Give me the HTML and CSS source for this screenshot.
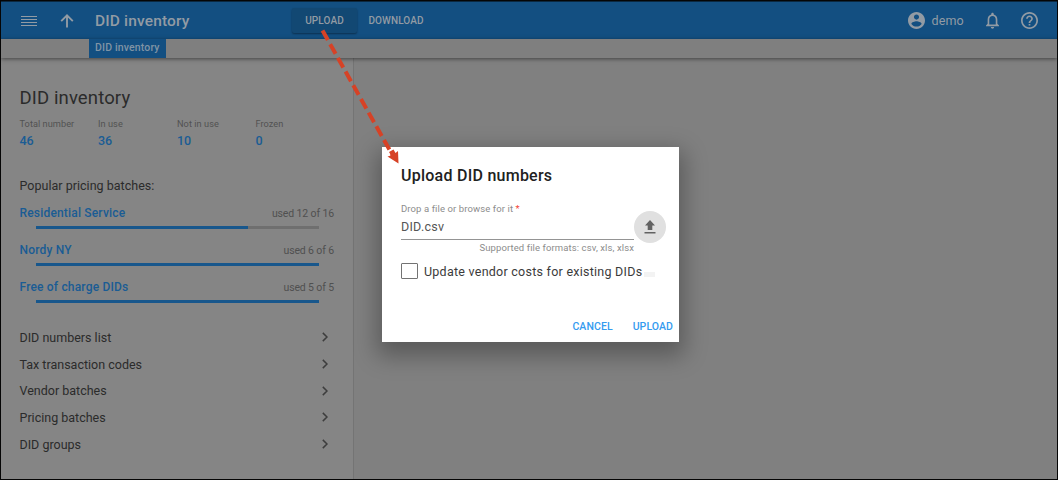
FILE: index.html
```html
<!DOCTYPE html>
<html lang="en">
<head>
<meta charset="utf-8">
<title>DID inventory</title>
<link rel="stylesheet" href="styles.css">
</head>
<body>
<div class="app">
  <header class="topbar">
    <svg class="icon menu" viewBox="0 0 16 12"><path d="M0 1.500h16M0 4.500h16M0 7.500h16M0 10.500h16" stroke="currentColor" stroke-width="1.100" fill="none"/></svg>
    <svg class="icon up" viewBox="0 0 14 14"><path d="M7 13.5V2M1.2 7.2L7 1.4l5.8 5.8" stroke="currentColor" stroke-width="1.9" fill="none"/></svg>
    <h1 class="title">DID inventory</h1>
    <nav class="actions">
      <a class="action active">UPLOAD</a>
      <a class="action">DOWNLOAD</a>
    </nav>
    <div class="account">
      <svg class="icon user" viewBox="2 2 20 20"><path fill="currentColor" d="M12 2C6.48 2 2 6.48 2 12s4.48 10 10 10 10-4.480 10-10S17.520 2 12 2zm0 3c1.660 0 3 1.340 3 3s-1.340 3-3 3-3-1.340-3-3 1.340-3 3-3zm0 14.200c-2.500 0-4.710-1.280-6-3.220.030-1.990 4-3.080 6-3.080 1.990 0 5.970 1.090 6 3.080-1.290 1.940-3.500 3.220-6 3.220z"/></svg>
      <span class="username">demo</span>
      <svg class="icon bell" viewBox="4 2 16 20"><path fill="currentColor" d="M12 22c1.100 0 2-.900 2-2h-4c0 1.100.900 2 2 2zm6-6v-5c0-3.070-1.630-5.640-4.500-6.320V4c0-.830-.670-1.500-1.500-1.500s-1.500.670-1.500 1.500v.680C7.640 5.360 6 7.920 6 11v5l-2 2v1h16v-1l-2-2zm-2 1H8v-6c0-2.480 1.510-4.500 4-4.500s4 2.020 4 4.500v6z"/></svg>
      <svg class="icon help" viewBox="2 2 20 20"><path fill="currentColor" d="M11 18h2v-2h-2v2zm1-16C6.480 2 2 6.480 2 12s4.480 10 10 10 10-4.480 10-10S17.520 2 12 2zm0 18c-4.410 0-8-3.590-8-8s3.590-8 8-8 8 3.590 8 8-3.590 8-8 8zm0-14c-2.210 0-4 1.790-4 4h2c0-1.100.900-2 2-2s2 .900 2 2c0 2-3 1.750-3 5h2c0-2.250 3-2.500 3-5 0-2.210-1.790-4-4-4z"/></svg>
    </div>
  </header>
  <div class="crumbs"><span class="crumb">DID inventory</span></div>
  <main class="content">
    <aside class="panel">
      <h2 class="heading">DID inventory</h2>
      <div class="stats">
        <div><div class="label">Total number</div><div class="value">46</div></div>
        <div><div class="label">In use</div><div class="value">36</div></div>
        <div><div class="label">Not in use</div><div class="value">10</div></div>
        <div><div class="label">Frozen</div><div class="value">0</div></div>
      </div>
      <h3 class="subheading">Popular pricing batches:</h3>
      <div class="batch"><div class="row"><a class="name">Residential Service</a><span class="used">used 12 of 16</span></div><div class="track"><div class="fill" style="width:75%"></div></div></div>
      <div class="batch"><div class="row"><a class="name">Nordy NY</a><span class="used">used 6 of 6</span></div><div class="track"><div class="fill" style="width:100%"></div></div></div>
      <div class="batch"><div class="row"><a class="name">Free of charge DIDs</a><span class="used">used 5 of 5</span></div><div class="track"><div class="fill" style="width:100%"></div></div></div>
      <ul class="links">
        <li><span>DID numbers list</span><svg class="chev" viewBox="0 0 6 10"><path d="M.8.9L5 5 .8 9.100" /></svg></li>
        <li><span>Tax transaction codes</span><svg class="chev" viewBox="0 0 6 10"><path d="M.8.9L5 5 .8 9.100" /></svg></li>
        <li><span>Vendor batches</span><svg class="chev" viewBox="0 0 6 10"><path d="M.8.9L5 5 .8 9.100" /></svg></li>
        <li><span>Pricing batches</span><svg class="chev" viewBox="0 0 6 10"><path d="M.8.9L5 5 .8 9.100" /></svg></li>
        <li><span>DID groups</span><svg class="chev" viewBox="0 0 6 10"><path d="M.8.9L5 5 .8 9.100" /></svg></li>
      </ul>
    </aside>
  </main>
  <section class="dialog">
    <h2 class="dialog-title">Upload DID numbers</h2>
    <div class="file">
      <div class="field">
        <div class="field-label">Drop a file or browse for it <span class="req">*</span></div>
        <div class="field-value">DID.csv</div>
        <div class="hint">Supported file formats: csv, xls, xlsx</div>
      </div>
      <div class="browse"><svg viewBox="0 0 12 14"><path fill="currentColor" d="M6 0l5 5.500H8.300V10H3.700V5.500H1zM.5 12h11v1.500H.5z"/></svg></div>
    </div>
    <div class="option"><span class="box"></span><span class="option-text">Update vendor costs for existing DIDs</span><span class="mark"></span></div>
    <div class="buttons"><a class="cancel">CANCEL</a><a class="submit">UPLOAD</a></div>
  </section>
  <svg class="arrow" viewBox="0 0 1058 480"><path d="M322.500 30.500L393 156" stroke="#d64226" stroke-width="4" stroke-dasharray="11 4.700" fill="none"/><path d="M398.500 163.500L387.500 156.500L391 155.500L389 152L393.500 149.500L395.500 153L398 151z" fill="#d64226"/></svg>
</div>
</body>
</html>
```
FILE: styles.css
```css
* { box-sizing: border-box; }
body { margin: 0; font-family: Roboto, "Liberation Sans", sans-serif; color: #2b2b2b; }
h1, h2, h3, ul { margin: 0; padding: 0; font-weight: 400; list-style: none; }
svg { display: block; flex: none; }
.app { position: relative; width: 1058px; height: 480px; overflow: hidden; background: #808080; border: 1px solid #050505; display: flex; flex-direction: column; white-space: nowrap; }
.topbar { height: 38px; flex: none; display: flex; align-items: center; padding: 0 20px 0; background: #134f81; border-top: 1px solid #0b2840; color: #929ba4; }
.menu { width: 16px; height: 12px; }
.up { width: 14px; height: 14px; margin-left: 23px; }
.title { width: 196px; margin-left: 21px; font-size: 15.500px; font-weight: 500; letter-spacing: .15px; }
.actions { display: flex; align-items: center; font-size: 10px; font-weight: 500; letter-spacing: .1px; }
.action { display: flex; justify-content: center; align-items: center; height: 25px; width: 78px; border-radius: 2px; }
.action.active { width: 65px; margin-left: 1px; background: #124873; box-shadow: 0 1px 2px rgba(0,0,0,.4); }
.account { margin-left: auto; display: flex; align-items: center; }
.user { width: 17px; height: 17px; margin-right: 7px; }
.username { width: 54px; font-size: 12.500px; line-height: 17px; letter-spacing: .1px; }
.bell { width: 13px; height: 17px; margin-right: 22px; }
.help { width: 17px; height: 17px; margin-right: -.5px; }
.crumbs { height: 19px; flex: none; padding-left: 88px; background: #7f7f7f; box-shadow: 0 1px 4px rgba(0,0,0,.5); z-index: 1; }
.crumb { display: block; width: 77px; height: 19px; padding-left: 6px; line-height: 18px; font-size: 10.500px; font-weight: 500; letter-spacing: .15px; background: #134f81; color: #8094a5; }
.content { flex: 1; display: flex; }
.panel { width: 353px; padding: 28px 19px 0 18.500px; background: #858585; border-right: 1px solid #747474; }
.heading { height: 32px; line-height: 24px; font-size: 18.500px; letter-spacing: .13px; }
.stats { display: grid; grid-template-columns: 78.500px 79px 78.500px 60px; height: 57px; }
.label { height: 11px; line-height: 11px; font-size: 9.200px; letter-spacing: .05px; color: #525252; }
.value { margin-top: 3px; line-height: 17px; font-size: 12.500px; font-weight: 500; color: #1a5c94; }
.subheading { height: 28px; line-height: 22px; font-size: 12.500px; letter-spacing: .02px; }
.batch { height: 37px; }
.row { display: flex; justify-content: space-between; height: 23px; line-height: 20px; }
.name { color: #1a5c94; font-size: 12px; font-weight: 500; letter-spacing: .18px; }
.used { font-size: 10.500px; line-height: 21px; letter-spacing: -.13px; color: #505050; }
.track { width: 283px; height: 3px; margin-left: 16.500px; background: #6f6f6f; }
.fill { height: 3px; background: #18578c; }
.links { margin-top: 10px; }
.links li { display: flex; justify-content: space-between; align-items: center; height: 26.700px; padding-right: 6px; font-size: 12.500px; }
.chev { width: 6px; height: 10px; fill: none; stroke: #3d3d3d; stroke-width: 1.500; }
.dialog { position: absolute; left: 381px; top: 146px; width: 297px; height: 195px; padding: 18px 6px 0 19px; background: #fff; box-shadow: 0 9px 22px 5px rgba(0,0,0,.3); z-index: 2; }
.dialog-title { height: 37px; line-height: 22px; font-size: 16px; font-weight: 500; letter-spacing: .25px; color: #212121; }
.file { display: flex; }
.field { width: 233px; }
.field-label { height: 13px; line-height: 13px; font-size: 9.500px; letter-spacing: .1px; color: #8c8c8c; }
.req { color: #f44336; }
.field-value { height: 25px; line-height: 23px; border-bottom: 1px solid #949494; font-size: 12.500px; letter-spacing: .25px; color: #555; }
.hint { line-height: 15px; text-align: right; font-size: 9.500px; letter-spacing: .1px; color: #8c8c8c; }
.browse { display: flex; align-items: center; justify-content: center; width: 32px; height: 32px; margin-top: 9px; border-radius: 50%; background: #e0e0e0; color: #626262; }
.browse svg { width: 12px; height: 14px; }
.option { display: flex; align-items: center; height: 20px; margin-top: 6px; }
.box { width: 17px; height: 16px; border: 1.500px solid #737373; border-radius: 1px; }
.option-text { margin-left: 6px; font-size: 12.500px; letter-spacing: .25px; color: #3b3b3b; }
.mark { width: 11px; height: 5px; margin: 7px 0 0 2px; background: #f3f3f3; }
.buttons { display: flex; justify-content: flex-end; margin-top: 38px; line-height: 16px; font-size: 10.500px; font-weight: 500; letter-spacing: .08px; color: #349bef; }
.submit { margin-left: 20px; }
.arrow { position: absolute; left: -1px; top: -1px; width: 1058px; height: 480px; z-index: 3; }
```
